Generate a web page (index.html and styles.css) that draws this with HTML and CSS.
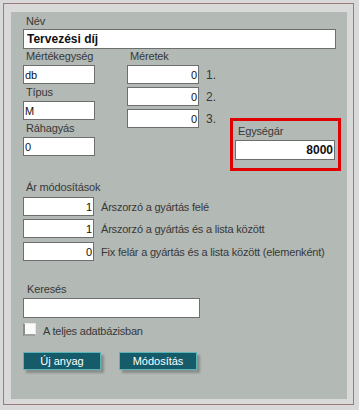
FILE: index.html
```html
<!DOCTYPE html>
<html lang="hu">
<head>
    <meta charset="UTF-8">
    <meta name="viewport" content="width=device-width, initial-scale=1.0">
    <title>Anyag</title>
    <link rel="stylesheet" href="styles.css">
</head>
<body>
    <div class="frame">
        <div class="panel">
            <label class="lbl" for="nev">Név</label>
            <input type="text" id="nev" class="input name" value="Tervezési díj">

            <div class="top">
                <div class="col-left">
                    <label class="lbl" for="me">Mértékegység</label>
                    <input type="text" id="me" class="input small" value="db">
                    <label class="lbl" for="tipus">Típus</label>
                    <input type="text" id="tipus" class="input small" value="M">
                    <label class="lbl" for="rahagyas">Ráhagyás</label>
                    <input type="text" id="rahagyas" class="input small" value="0">
                </div>

                <div class="col-sizes">
                    <label class="lbl">Méretek</label>
                    <div class="size-row">
                        <input type="text" class="input small num" value="0">
                        <span class="idx">1.</span>
                    </div>
                    <div class="size-row">
                        <input type="text" class="input small num" value="0">
                        <span class="idx">2.</span>
                    </div>
                    <div class="size-row">
                        <input type="text" class="input small num" value="0">
                        <span class="idx">3.</span>
                    </div>
                </div>

                <div class="price-box">
                    <label class="lbl" for="ar">Egységár</label>
                    <input type="text" id="ar" class="input price num" value="8000">
                </div>
            </div>

            <div class="mods">
                <label class="lbl">Ár módosítások</label>
                <div class="mod-row">
                    <input type="text" class="input mod num" value="1">
                    <span class="mod-text">Árszorzó a gyártás felé</span>
                </div>
                <div class="mod-row">
                    <input type="text" class="input mod num" value="1">
                    <span class="mod-text">Árszorzó a gyártás és a lista között</span>
                </div>
                <div class="mod-row last">
                    <input type="text" class="input mod num" value="0">
                    <span class="mod-text">Fix felár a gyártás és a lista között (elemenként)</span>
                </div>
            </div>

            <div class="search">
                <label class="lbl search-lbl" for="kereses">Keresés</label>
                <input type="text" id="kereses" class="input search-input" value="">
                <label class="check">
                    <span class="box"></span>
                    <span class="check-text">A teljes adatbázisban</span>
                </label>
            </div>

            <div class="buttons">
                <button class="btn">Új anyag</button>
                <button class="btn">Módosítás</button>
            </div>
        </div>
    </div>
</body>
</html>
```

FILE: styles.css
```css
body {
    margin: 0;
    background-color: #d9d9d9;
    font-family: "Liberation Sans", Arial, sans-serif;
    font-size: 11px;
    color: #383838;
}
.frame {
    margin: 3px;
    width: 351px;
    height: 402px;
    border: 1px solid #9c7b7d;
    box-sizing: border-box;
    padding: 8px 6px 5px 7px;
}
.panel {
    height: 100%;
    background-color: #b3b9b5;
    padding: 2px 0 0 12px;
    box-sizing: border-box;
}
.lbl {
    display: block;
    line-height: 14px;
    height: 14px;
    margin-left: 3px;
    letter-spacing: -0.15px;
}
.input {
    display: block;
    box-sizing: border-box;
    border: 1px solid #6e6e6e;
    background-color: white;
    font-family: "Liberation Sans", Arial, sans-serif;
    font-size: 11px;
    color: #111;
    padding: 0 1px;
    margin: 0;
    outline: none;
}
.num {
    text-align: right;
}
.name {
    width: 313px;
    height: 20px;
    margin-top: 1px;
    font-weight: bold;
    font-size: 12px;
    padding-left: 3px;
}
.small {
    width: 72px;
    height: 19px;
}
.top {
    display: grid;
    grid-template-columns: 104px 103px 111px;
    align-items: start;
}
.col-left .lbl {
    margin-bottom: 2px;
}
.col-left .input {
    margin-bottom: 1px;
}
.col-sizes .lbl {
    margin-bottom: 2px;
}
.size-row {
    display: flex;
    align-items: center;
    margin-bottom: 3px;
}
.idx {
    margin-left: 7px;
    font-size: 12px;
}
.price-box {
    margin-top: 69px;
    height: 53px;
    border: 3px solid #e00000;
    box-sizing: border-box;
    padding: 3px 2px 0 2px;
}
.price-box .lbl {
    margin-left: 3px;
    margin-bottom: 2px;
}
.price {
    width: 100px;
    height: 20px;
    font-weight: bold;
    font-size: 12px;
}
.mods {
    margin-top: 9px;
}
.mods .lbl {
    margin-bottom: 3px;
}
.mod-row {
    display: flex;
    align-items: center;
    margin-bottom: 3px;
}
.mod-row.last {
    margin-top: 4px;
}
.mod {
    width: 71px;
    height: 19px;
}
.mod-text {
    margin-left: 7px;
    letter-spacing: -0.2px;
}
.search {
    margin-top: 21px;
}
.search-lbl {
    margin-left: 4px;
    margin-bottom: 2px;
}
.search-input {
    width: 177px;
    height: 20px;
}
.check {
    display: flex;
    align-items: flex-start;
    margin-top: 5px;
}
.box {
    width: 13px;
    height: 13px;
    box-sizing: border-box;
    background-color: #fbfbfb;
    border-left: 2px solid #8c8c8c;
    border-bottom: 2px solid #a0a0a0;
    border-top: 1px solid #e6e6e6;
    border-right: 1px solid #e6e6e6;
}
.check-text {
    margin-left: 7px;
    line-height: 14px;
    margin-top: 1px;
    letter-spacing: -0.2px;
}
.buttons {
    display: flex;
    gap: 18px;
    margin-top: 14px;
}
.btn {
    width: 78px;
    height: 18px;
    padding: 0;
    background-color: #155b6a;
    border: 1px solid #5db3b5;
    color: white;
    font-family: "Liberation Sans", Arial, sans-serif;
    font-size: 11px;
    box-shadow: 3px 3px 2px rgba(60, 60, 60, 0.35);
    cursor: pointer;
}
```
